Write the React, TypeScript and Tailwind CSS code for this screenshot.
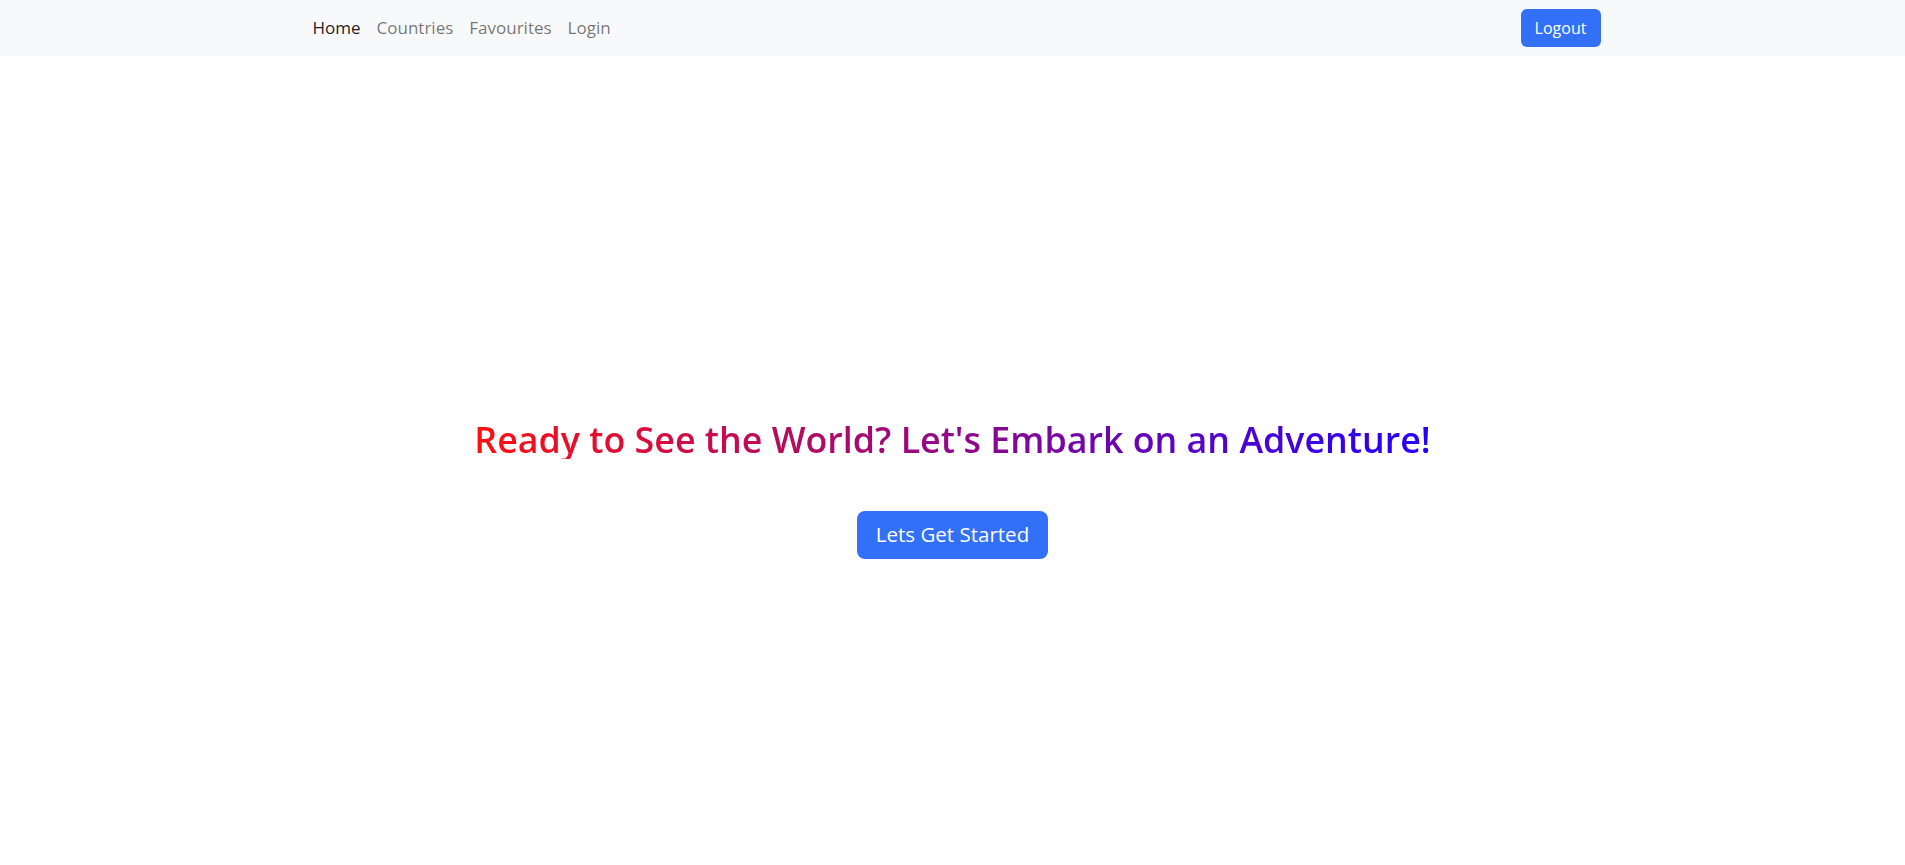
export default function App() {
  const links = ['Home', 'Countries', 'Favourites', 'Login'];

  return (
    <div className="min-h-screen bg-white font-['Open_Sans',sans-serif]">
      {/* navbar */}
      <nav className="h-14 bg-[#f8f9fa]">
        <div className="mx-auto flex h-full max-w-[1320px] items-center justify-between px-3">
          <ul className="flex items-center">
            {links.map((l, i) => (
              <li key={l}>
                <a
                  href="#"
                  className={
                    i === 0
                      ? 'block px-2 py-2 text-[17px] text-black/90'
                      : 'block px-2 py-2 text-[17px] text-black/55'
                  }
                >
                  {l}
                </a>
              </li>
            ))}
          </ul>
          <button className="h-[38px] w-20 rounded-md bg-[#3370f8] text-[16px] text-white">
            Logout
          </button>
        </div>
      </nav>

      {/* hero */}
      <section className="flex h-[809px] flex-col items-center justify-center pt-14">
        <h3 className="mb-[52px] bg-[linear-gradient(to_right,#ff1010,#2200ff)] bg-clip-text text-[35.8px] font-semibold leading-[40px] text-transparent">
          Ready to See the World? Let's Embark on an Adventure!
        </h3>
        <button className="h-12 w-[191px] rounded-lg bg-[#3370f8] text-[20.5px] text-white">
          Lets Get Started
        </button>
      </section>
    </div>
  );
}
